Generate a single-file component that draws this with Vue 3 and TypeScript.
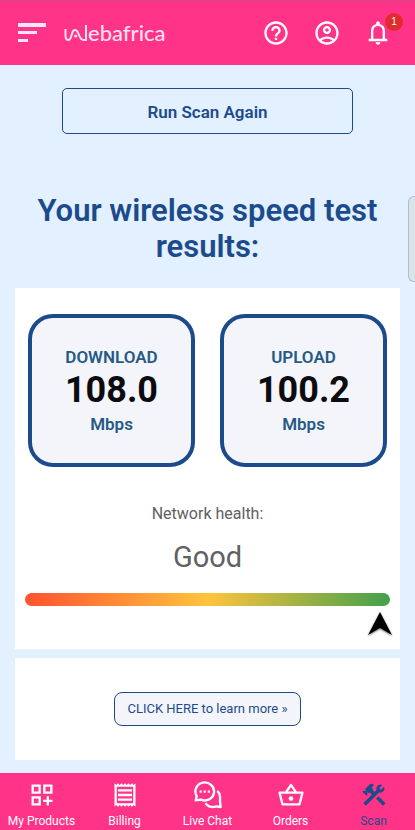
<script setup lang="ts">
import { ref } from 'vue'

interface Reading {
  label: string
  value: string
  unit: string
}

interface Tab {
  id: string
  label: string
}

const notifications = ref<number>(1)
const readings: Reading[] = [
  { label: 'DOWNLOAD', value: '108.0', unit: 'Mbps' },
  { label: 'UPLOAD', value: '100.2', unit: 'Mbps' },
]
const tabs: Tab[] = [
  { id: 'products', label: 'My Products' },
  { id: 'billing', label: 'Billing' },
  { id: 'chat', label: 'Live Chat' },
  { id: 'orders', label: 'Orders' },
  { id: 'scan', label: 'Scan' },
]
const activeTab = ref<string>('scan')
const health = ref<string>('Good')
</script>

<template>
  <div class="page">
    <header class="topbar">
      <button class="icon-button" type="button" aria-label="Menu">
        <svg class="menu-icon" viewBox="0 0 28 20">
          <path d="M0 0h28v4H0zM0 8h19v3H0zM0 16h10v3H0z" />
        </svg>
      </button>
      <a class="brand" href="#" aria-label="Webafrica">
        <svg class="brand-mark" viewBox="0 0 24 18">
          <path d="M1.500 5v6c0 3.500 1 5 2.700 5 1.800 0 2.500-1.500 3.300-4.500C8.500 7.500 9 6 11 6s2.700 1.300 3.800 4.500C16.300 14.800 17.500 16 19.500 16H22V1" />
          <circle cx="11.700" cy="12" r="1.600" />
        </svg>
        <span class="brand-text">ebafrica</span>
      </a>
      <div class="actions">
        <button class="icon-button" type="button" aria-label="Help">
          <svg class="icon" viewBox="0 0 24 24">
            <path d="M11 18h2v-2h-2v2zm1-16C6.480 2 2 6.480 2 12s4.480 10 10 10 10-4.480 10-10S17.520 2 12 2zm0 18c-4.410 0-8-3.590-8-8s3.590-8 8-8 8 3.590 8 8-3.590 8-8 8zm0-14c-2.210 0-4 1.790-4 4h2c0-1.100.9-2 2-2s2 .9 2 2c0 2-3 1.750-3 5h2c0-2.250 3-2.500 3-5 0-2.210-1.790-4-4-4z" />
          </svg>
        </button>
        <button class="icon-button" type="button" aria-label="Account">
          <svg class="icon" viewBox="0 0 24 24">
            <path d="M12 2C6.480 2 2 6.480 2 12s4.480 10 10 10 10-4.480 10-10S17.520 2 12 2zM7.350 18.500C8.660 17.560 10.260 17 12 17s3.340.56 4.650 1.500C15.340 19.440 13.740 20 12 20s-3.340-.56-4.650-1.500zm10.790-1.380C16.450 15.800 14.320 15 12 15s-4.450.8-6.140 2.120C4.700 15.730 4 13.950 4 12c0-4.420 3.580-8 8-8s8 3.580 8 8c0 1.950-.7 3.730-1.860 5.120zM12 6c-1.930 0-3.500 1.570-3.500 3.500S10.070 13 12 13s3.500-1.570 3.500-3.500S13.930 6 12 6zm0 5c-.83 0-1.500-.67-1.500-1.500S11.170 8 12 8s1.500.67 1.500 1.500S12.830 11 12 11z" />
          </svg>
        </button>
        <button class="icon-button" type="button" aria-label="Notifications">
          <svg class="icon" viewBox="0 0 24 24">
            <path d="M4 19v-2h2v-7q0-2.075 1.250-3.687T10.500 4.200v-.7q0-.625.438-1.062T12 2t1.063.438T13.500 3.500v.7q2 .5 3.250 2.113T18 10v7h2v2zm8 3q-.825 0-1.412-.587T10 20h4q0 .825-.587 1.413T12 22m-4-5h8v-7q0-1.650-1.175-2.825T12 6T9.175 7.175T8 10z" />
          </svg>
          <span class="badge">{{ notifications }}</span>
        </button>
      </div>
    </header>

    <main class="content">
      <button class="rescan" type="button">Run Scan Again</button>
      <h1 class="title">Your wireless speed test results:</h1>

      <section class="card results">
        <div class="readings">
          <div v-for="r in readings" :key="r.label" class="reading">
            <span class="reading-label">{{ r.label }}</span>
            <strong class="reading-value">{{ r.value }}</strong>
            <span class="reading-label">{{ r.unit }}</span>
          </div>
        </div>
        <p class="health-label">Network health:</p>
        <p class="health-value">{{ health }}</p>
        <div class="scale"></div>
        <div class="pointer-row">
          <svg class="pointer" viewBox="0 0 24 24">
            <path d="M12 0L24 23L12 16L0 23z" />
          </svg>
        </div>
      </section>

      <section class="card more">
        <a class="learn" href="#">CLICK HERE to learn more »</a>
      </section>
      <div class="edge-handle"></div>
    </main>

    <nav class="tabs">
      <a v-for="t in tabs" :key="t.id" href="#" class="tab" :class="{ active: t.id === activeTab }">
        <svg class="icon" viewBox="0 0 24 24">
          <path v-if="t.id === 'products'" d="M3 11h8V3H3v8zm2-6h4v4H5V5zM13 3v8h8V3h-8zm6 6h-4V5h4v4zM3 21h8v-8H3v8zm2-6h4v4H5v-4zM18 13h-2v3h-3v2h3v3h2v-3h3v-2h-3v-3z" />
          <path v-else-if="t.id === 'billing'" d="M19.500 3.500L18 2l-1.500 1.500L15 2l-1.500 1.500L12 2l-1.500 1.500L9 2 7.500 3.500 6 2 4.500 3.500 3 2v20l1.500-1.500L6 22l1.500-1.500L9 22l1.500-1.500L12 22l1.500-1.500L15 22l1.500-1.500L18 22l1.500-1.500L21 22V2l-1.500 1.500zM19 19.090H5V4.910h14v14.180zM6 15h12v2H6zm0-4h12v2H6zm0-4h12v2H6z" />
          <g v-else-if="t.id === 'chat'">
            <path class="line" d="M1.500 16.500L2.300 12.800A8 7.700 0 1 1 6 16zM20 8.500A7 7 0 0 1 22.300 14.500V17.500L22.800 22.300 19 21.800A8.500 8.500 0 0 1 9.800 19" />
            <path d="M4.800 8.200h1.800V10H4.800zM8.300 8.200h1.800V10H8.300zM11.800 8.200h1.800V10h-1.800z" />
          </g>
          <g v-else-if="t.id === 'orders'">
            <path class="line" d="M2.200 10h19.600l-2.500 10H4.700zM7.500 10L12 3.300 16.500 10" />
            <circle cx="12" cy="15" r="2" />
          </g>
          <path v-else d="M13.783 15.172l2.121-2.121 5.996 5.996-2.121 2.121zM17.500 10c1.930 0 3.500-1.570 3.500-3.500 0-.58-.16-1.120-.41-1.600l-2.700 2.700-1.490-1.490 2.700-2.700c-.48-.25-1.020-.41-1.600-.41C15.570 3 14 4.570 14 6.500c0 .41.08.8.21 1.160l-1.850 1.850-1.780-1.780.71-.71-1.410-1.410L12 3.490a3 3 0 0 0-4.240 0L4.220 7.030l1.410 1.410H2.810l-.71.71 3.540 3.540.71-.71V9.150l1.410 1.410.71-.71 1.780 1.780-7.410 7.410 2.120 2.120L16.340 9.790c.36.13.75.21 1.160.21z" />
        </svg>
        <span>{{ t.label }}</span>
      </a>
    </nav>
  </div>
</template>

<style>
body {
  margin: 0;
  background: #e3f0ff;
}
</style>

<style scoped>
.page {
  display: flex;
  flex-direction: column;
  min-height: 100vh;
  font-family: Roboto, "Liberation Sans", sans-serif;
  color: #1c4b8c;
}
.page * {
  box-sizing: border-box;
}
.topbar {
  display: flex;
  align-items: center;
  height: 65px;
  padding: 0 23px 0 18px;
  background: #ff3387;
  border-top: 1px solid #d54a80;
}
.icon-button {
  position: relative;
  display: flex;
  padding: 0;
  border: 0;
  background: none;
  color: #fff;
}
svg {
  display: block;
  fill: currentColor;
}
.icon {
  width: 28px;
  height: 28px;
}
.menu-icon {
  width: 28px;
  height: 20px;
  fill: #ffe6f2;
}
.brand {
  display: flex;
  align-items: center;
  margin-left: 18px;
  color: #ffe0ee;
  text-decoration: none;
}
.brand-mark {
  width: 24px;
  height: 18px;
}
.brand-mark path {
  fill: none;
  stroke: currentColor;
  stroke-width: 2;
}
.brand-text {
  font-family: Lato, sans-serif;
  font-size: 22px;
  font-weight: 500;
  line-height: 24px;
}
.actions {
  display: flex;
  gap: 23px;
  margin-left: auto;
}
.badge {
  position: absolute;
  top: -6px;
  right: -11px;
  width: 18px;
  height: 18px;
  border-radius: 50%;
  background: #df2c2c;
  font-size: 10px;
  line-height: 18px;
  text-align: center;
}
.content {
  position: relative;
  flex: 1;
  display: flex;
  flex-direction: column;
  padding: 23px 15px 13px;
}
.rescan {
  align-self: center;
  width: 70vw;
  height: 46px;
  padding: 1px 0 0;
  border: 1px solid #1c4b8c;
  border-radius: 5px;
  background: none;
  color: inherit;
  font: 600 17px/24px Roboto, sans-serif;
}
.title {
  margin: 59px 0 23px;
  font-size: 31px;
  font-weight: 600;
  line-height: 36px;
  text-align: center;
}
.card {
  background: #fff;
}
.results {
  padding: 26px 10px 13px;
}
.readings {
  display: grid;
  grid-template-columns: 1fr 1fr;
  gap: 25px;
  padding: 0 3px;
}
.reading {
  display: flex;
  flex-direction: column;
  align-items: center;
  justify-content: center;
  height: 153px;
  border: 4px solid #1c4b8c;
  border-radius: 25px;
  background: #f4f5fb;
}
.reading-label {
  color: #255a86;
  font-size: 17px;
  font-weight: 600;
  line-height: 24px;
}
.reading-value {
  color: #0c0c10;
  font-size: 36px;
  font-weight: 700;
  line-height: 43px;
}
.health-label,
.health-value {
  margin: 0;
  color: #616161;
  text-align: center;
}
.health-label {
  margin-top: 35px;
  font-size: 16px;
  line-height: 24px;
}
.health-value {
  margin-top: 12px;
  font-size: 29px;
  line-height: 38px;
}
.scale {
  height: 13px;
  margin-top: 17px;
  border-radius: 7px;
  background: linear-gradient(to right, #ff5230, #ffc43d 50%, #43a04b);
}
.pointer-row {
  display: flex;
  justify-content: flex-end;
  margin-top: 6px;
}
.pointer {
  width: 24px;
  height: 24px;
  margin-right: -2px;
  overflow: visible;
  fill: #000;
  filter: drop-shadow(0 1px 1px #777);
}
.more {
  display: flex;
  align-items: center;
  justify-content: center;
  height: 102px;
  margin-top: 9px;
}
.learn {
  padding: 4px 12px;
  border: 1px solid #1c4b8c;
  border-radius: 8px;
  background: #f4f5fb;
  color: inherit;
  font-size: 13px;
  line-height: 24px;
  text-decoration: none;
}
.edge-handle {
  position: absolute;
  top: 131px;
  right: 0;
  width: 7px;
  height: 86px;
  border: 1px solid #b4bec8;
  border-right: 0;
  border-radius: 6px 0 0 6px;
  background: #dae3ea;
}
.tabs {
  display: grid;
  grid-template-columns: repeat(5, 1fr);
  background: #ff3387;
}
.tab {
  display: flex;
  flex-direction: column;
  align-items: center;
  gap: 4px;
  padding: 8px 0 1px;
  color: #fff;
  font-size: 12px;
  line-height: 16px;
  text-decoration: none;
}
.tab.active {
  color: #1c4b8c;
}
.line {
  fill: none;
  stroke: currentColor;
  stroke-width: 2;
  stroke-linejoin: round;
}
</style>
